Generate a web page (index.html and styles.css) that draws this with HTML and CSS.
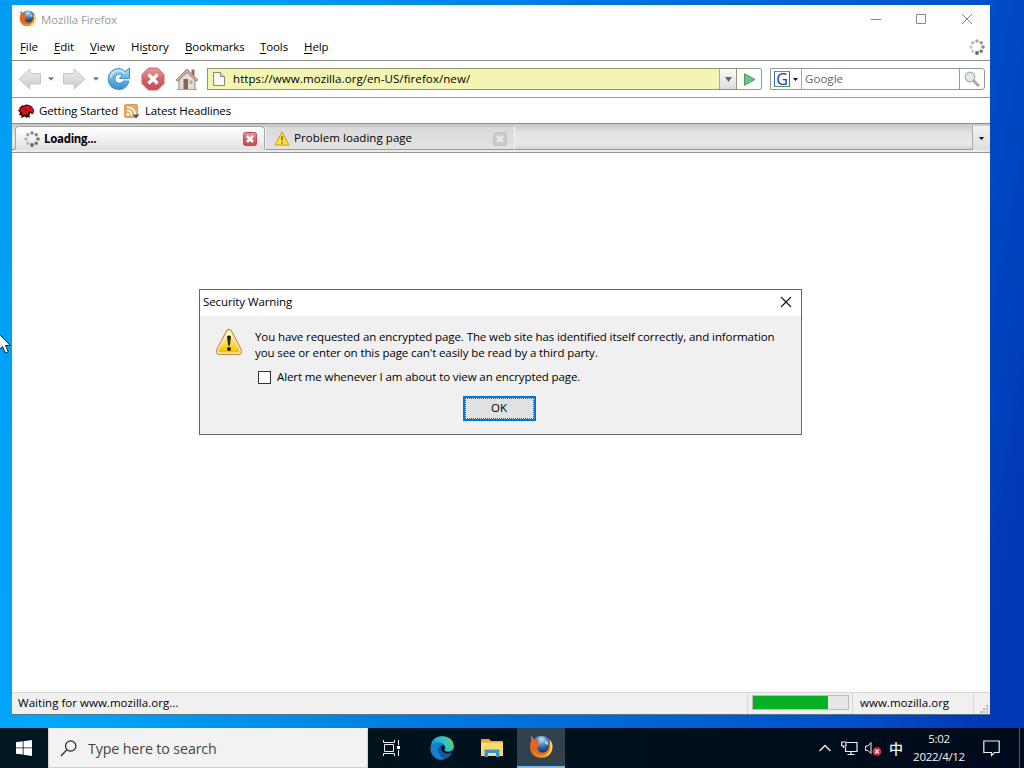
FILE: index.html
```html
<!DOCTYPE html>
<html lang="en">
<head>
    <meta charset="UTF-8"/>
    <title>Mozilla Firefox</title>
    <link rel="stylesheet" href="styles.css">
</head>
<body>
<!-- Shared icons -->
<svg class="defs" width="0" height="0">
    <defs>
        <radialGradient id="globe" cx="50%" cy="20%" r="70%">
            <stop offset="0" stop-color="#b4dcf4"/>
            <stop offset="0.45" stop-color="#3977b8"/>
            <stop offset="1" stop-color="#101f50"/>
        </radialGradient>
        <linearGradient id="fur" x1="0" y1="0" x2="1" y2="1">
            <stop offset="0" stop-color="#e5642c"/>
            <stop offset="0.6" stop-color="#e2661c"/>
            <stop offset="1" stop-color="#f3a530"/>
        </linearGradient>
        <linearGradient id="grey" x1="0" y1="0" x2="0" y2="1">
            <stop offset="0" stop-color="#ececec"/>
            <stop offset="1" stop-color="#cbcbcb"/>
        </linearGradient>
        <linearGradient id="yellow" x1="0" y1="0" x2="0" y2="1">
            <stop offset="0" stop-color="#fffbd0"/>
            <stop offset="0.5" stop-color="#fbe04a"/>
            <stop offset="1" stop-color="#eebc10"/>
        </linearGradient>
        <linearGradient id="blue" x1="0" y1="0" x2="0" y2="1">
            <stop offset="0" stop-color="#a5d8f3"/>
            <stop offset="1" stop-color="#2f8fce"/>
        </linearGradient>
        <linearGradient id="red" x1="0" y1="0" x2="0" y2="1">
            <stop offset="0" stop-color="#e89c9c"/>
            <stop offset="0.5" stop-color="#d4636a"/>
            <stop offset="1" stop-color="#c84a50"/>
        </linearGradient>
        <linearGradient id="edge" x1="0" y1="0.6" x2="1" y2="0.2">
            <stop offset="0" stop-color="#1588d8"/>
            <stop offset="0.5" stop-color="#2bbcd5"/>
            <stop offset="1" stop-color="#62d760"/>
        </linearGradient>
        <symbol id="firefox" viewBox="0 0 24 24">
            <circle cx="12.5" cy="11" r="10.3" fill="url(#globe)"/>
            <path d="M9 4l4-2 3 2-2 2-3 0-1 2zM16 5l3 2 0 3-3-1z" fill="#a5d0ec"/>
            <path d="M2.500 .8Q4 2 5 4.800Q8 4 10.500 5.500Q8.500 6.500 8.500 8.500Q10.500 8.500 11.500 10Q10.500 11.500 8.500 11.800Q8 15.500 11.500 17.300Q16.500 18.500 19 14.500Q20.500 11 19.500 7Q20.500 7.500 21 8.500Q21 5.500 19.500 3.500Q24 7 23.500 13Q22.200 22.500 12.300 23Q2 22.500 1 13Q.8 8.500 2.200 6Q1.600 3 2.500 .8z" fill="url(#fur)"/>
            <path d="M20.500 4.500Q24 8.500 23.300 13.500Q21.800 21.500 13 22.600Q18.500 20.500 20.500 16Q22 12 20.500 4.500z" fill="#fddb52"/>
            <path d="M3 14.500Q6 20.500 12.500 20.800Q17 20.500 19.500 17Q17.500 22 12 22Q5.500 21.500 3 14.500z" fill="#f4a52e"/>
        </symbol>
        <symbol id="spinner" viewBox="0 0 16 16">
            <circle cx="8" cy="2" r="1.800" fill="#a5a5a5"/>
            <circle cx="12.200" cy="3.800" r="1.800" fill="#989898"/>
            <circle cx="14" cy="8" r="1.800" fill="#888"/>
            <circle cx="12.200" cy="12.200" r="1.800" fill="#777"/>
            <circle cx="8" cy="14" r="1.900" fill="#666"/>
            <circle cx="3.800" cy="12.200" r="1.700" fill="#d0d0d0"/>
            <circle cx="2" cy="8" r="1.700" fill="#c6c6c6"/>
            <circle cx="3.800" cy="3.800" r="1.700" fill="#b8b8b8"/>
        </symbol>
        <symbol id="spinner-late" viewBox="0 0 16 16">
            <circle cx="8" cy="2" r="1.700" fill="#888"/>
            <circle cx="12.200" cy="3.800" r="1.700" fill="#858585"/>
            <circle cx="14" cy="8" r="1.800" fill="#777"/>
            <circle cx="12.200" cy="12.200" r="1.800" fill="#707070"/>
            <circle cx="8" cy="14" r="1.900" fill="#666"/>
            <circle cx="3.800" cy="12.200" r="1.700" fill="#bbb"/>
            <circle cx="2" cy="8" r="1.700" fill="#b5b5b5"/>
            <circle cx="3.800" cy="3.800" r="1.700" fill="#a5a5a5"/>
        </symbol>
        <symbol id="arrow" viewBox="0 0 24 22">
            <path d="M1 11L12 .8V5.500H22.500V16H12V21.200z" fill="url(#grey)" stroke="#c8c8c8"/>
        </symbol>
        <symbol id="drop" viewBox="0 0 7 4">
            <path d="M0 0H7L3.500 4z" fill="currentColor"/>
        </symbol>
    </defs>
</svg>

<main class="desktop">
    <section class="window">
        <header class="titlebar">
            <svg class="app-icon" width="17" height="17"><use href="#firefox"/></svg>
            <span class="title">Mozilla Firefox</span>
            <svg class="caption" width="110" height="13" viewBox="0 0 110 13" fill="none" stroke="#888">
                <path d="M4 7.500H14M49.500 2.500h9v9h-9zM95 2l10 10M105 2L95 12"/>
            </svg>
        </header>

        <nav class="menubar">
            <span class="m-file"><u>F</u>ile</span>
            <span class="m-edit"><u>E</u>dit</span>
            <span class="m-view"><u>V</u>iew</span>
            <span class="m-history">Hi<u>s</u>tory</span>
            <span class="m-bookmarks"><u>B</u>ookmarks</span>
            <span class="m-tools"><u>T</u>ools</span>
            <span class="m-help"><u>H</u>elp</span>
            <svg class="throbber" width="16" height="16"><use href="#spinner"/></svg>
        </nav>

        <div class="toolbar">
            <svg class="back" width="24" height="22"><use href="#arrow"/></svg>
            <svg class="small-drop" width="6" height="4"><use href="#drop"/></svg>
            <svg class="forward" width="24" height="22"><use href="#arrow"/></svg>
            <svg class="small-drop" width="6" height="4"><use href="#drop"/></svg>
            <svg class="reload" width="24" height="24" viewBox="0 0 24 24">
                <path d="M18 4.500L22.500 1V11.500H12.500L15.200 8Q11 5.500 8.500 9Q6.500 13.500 10.500 16Q14.500 17 16.500 14H22Q20 22.500 12 22.500Q1.500 22 1.200 12Q2 2 12 1.500Q15.500 1.500 18 4.500z" fill="url(#blue)" stroke="#3f93c5"/>
                <path d="M3.500 11Q4.500 4 12 3.500Q15.500 3.700 18 6.500" fill="none" stroke="#cceaf8" stroke-width="1.500"/>
            </svg>
            <svg class="stop" width="24" height="24" viewBox="0 0 24 24">
                <path d="M7.500 1H16.500L23 7.500V16.500L16.500 23H7.500L1 16.500V7.500z" fill="url(#red)" stroke="#c0686c"/>
                <path d="M7.500 7.500l9 9M16.500 7.500l-9 9" stroke="#fff" stroke-width="3.200"/>
            </svg>
            <svg class="home" width="24" height="24" viewBox="0 0 24 24">
                <path d="M16.500 2.500H19.500V9H16.500z" fill="#a56555"/>
                <path d="M4 11.500L12 4l8 7.500V22.500H4z" fill="#e6ded5" stroke="#92857b"/>
                <path d="M1 13L12 2l11 11-1.800 1.200L12 5.500 2.800 14.200z" fill="#c8aaa0" stroke="#94746a" stroke-width=".8"/>
                <path d="M8.500 12H13V23H8.500z" fill="#8c6357"/>
                <path d="M14.500 13.500H17.500V17H14.500z" fill="#a1afb9"/>
                <path d="M2 22.500H22" stroke="#9aa98c"/>
            </svg>
            <div class="urlbar">
                <svg class="page-icon" width="12" height="14" viewBox="0 0 12 14">
                    <path d="M.5 .5H7.500L11.500 4.500V13.500H.5z" fill="#f8f9f7" stroke="#8a8a85"/>
                    <path d="M7.500 .5V4.500H11.500" fill="#ddd" stroke="#8a8a85"/>
                </svg>
                <span class="url">https://www.mozilla.org/en-US/firefox/new/</span>
                <span class="url-drop"><svg width="7" height="5" viewBox="0 0 7 5"><path d="M0 0H7L3.500 5z" fill="#666"/></svg></span>
            </div>
            <div class="go">
                <svg width="13" height="13" viewBox="0 0 13 13"><path d="M1.500 .8L12 6.500 1.500 12.200z" fill="#72c484" stroke="#4b9a5b"/></svg>
            </div>
            <div class="search">
                <span class="engine">
                    <span class="g-logo">G</span>
                    <svg width="5" height="3"><use href="#drop"/></svg>
                </span>
                <span class="placeholder">Google</span>
                <span class="magnifier">
                    <svg width="17" height="17" viewBox="0 0 17 17">
                        <path d="M9.500 9.500L15 15" stroke="#909090" stroke-width="2.600"/>
                        <path d="M10 9.500L15 14.500" stroke="#ddd"/>
                        <circle cx="6" cy="6" r="4.800" fill="#dfeaee" stroke="#aaa" stroke-width="1.200"/>
                    </svg>
                </span>
            </div>
        </div>

        <div class="bookmarks">
            <svg class="dino" width="16" height="15" viewBox="0 0 16 15">
                <path d="M0 6L2 5 1 3.500 3 3 3.500 1.500 6 1.500 8 .5 11 1 14 2.500 16 6 15.500 9.500 14 10 12.500 9 11.500 11 12 13.500 9.500 13 9 14 6.500 12.500 3 14 3.500 11.500 1 11 2 9z" fill="#2b0505"/>
                <path d="M1.500 7Q3 3 8 1.700Q14 1.500 15.200 6L14.800 9 13.500 8.500 11.500 6.800 10 9 10.800 12 8.500 9.500 7 12 6 10 4 12 4.500 9z" fill="#d61218"/>
                <path d="M7 5.500H9V6.500H7z" fill="#300"/>
            </svg>
            <span class="b-start">Getting Started</span>
            <svg class="rss" width="16" height="16" viewBox="0 0 16 16">
                <rect x=".5" y="1.500" width="13" height="13" rx="1.500" fill="#e9ab62" stroke="#d89a5c"/>
                <circle cx="4" cy="11.500" r="1.400" fill="#fff"/>
                <path d="M3 7.500Q7.500 7.500 7.800 12.500M3 4Q11 4.500 11.300 12.500" fill="none" stroke="#fff" stroke-width="1.600"/>
                <path d="M8.500 11.500H15.500L12 15.500z" fill="#555"/>
            </svg>
            <span>Latest Headlines</span>
        </div>

        <div class="tabs">
            <div class="tab active">
                <svg class="tab-icon" width="16" height="16"><use href="#spinner-late"/></svg>
                <b class="tab-label">Loading...</b>
                <svg class="close" width="14" height="14" viewBox="0 0 14 14">
                    <rect x=".5" y=".5" width="13" height="13" rx="2" fill="url(#red)" stroke="#bd4a55"/>
                    <path d="M4 4l6 6M10 4l-6 6" stroke="#fff" stroke-width="2.500"/>
                </svg>
            </div>
            <div class="tab inactive">
                <svg class="tab-icon" width="16" height="15" viewBox="0 0 16 15">
                    <path d="M8 1L15 14H1z" fill="#fbe338" stroke="#c49a1c" stroke-linejoin="round"/>
                    <path d="M8 5V9.500M8 11V12.500" stroke="#69510a" stroke-width="1.300"/>
                </svg>
                <span class="tab-label">Problem loading page</span>
                <svg class="close" width="14" height="14" viewBox="0 0 14 14">
                    <rect x=".5" y=".5" width="13" height="13" rx="2" fill="#c9c9cb" stroke="#c3c3c6"/>
                    <path d="M4 4l6 6M10 4l-6 6" stroke="#e9e9e9" stroke-width="2.500"/>
                </svg>
            </div>
            <div class="all-tabs"><svg width="5" height="3"><use href="#drop"/></svg></div>
        </div>

        <div class="page"></div>

        <footer class="statusbar">
            <span class="status">Waiting for www.mozilla.org...</span>
            <span class="progress-panel"><span class="progress"><span class="bar"></span></span></span>
            <span class="host">www.mozilla.org</span>
            <span class="grip">
                <svg width="9" height="9" viewBox="0 0 9 9" fill="#b8b8b8"><path d="M6 0h2v2h-2zM3 3h2v2h-2zM6 3h2v2h-2zM0 6h2v2h-2zM3 6h2v2h-2zM6 6h2v2h-2z"/></svg>
            </span>
        </footer>
    </section>

    <section class="dialog">
        <header class="dialog-title">
            <span>Security Warning</span>
            <svg width="12" height="12" viewBox="0 0 12 12"><path d="M1 1l10 10M11 1L1 11" stroke="#111" stroke-width="1.100"/></svg>
        </header>
        <div class="dialog-body">
            <svg class="warning" width="28" height="28" viewBox="0 0 28 28">
                <path d="M11.200 3.500Q14 -.8 16.800 3.500L26.300 22Q27.200 26 23.500 26.300H4.500Q.8 26 1.700 22z" fill="#fff4cf" stroke="#c59048" stroke-width="1.200"/>
                <path d="M12.500 5Q14 2.500 15.500 5L24.600 22.500Q24.800 24.500 23 24.600H5Q3.200 24.500 3.400 22.500z" fill="url(#yellow)"/>
                <path d="M12 8.500Q14 6.500 16 8.500L14.900 17.500H13.100z" fill="#27200c"/>
                <circle cx="14" cy="21" r="2" fill="#27200c"/>
            </svg>
            <div class="message">
                <p>You have requested an encrypted page. The web site has identified itself correctly, and information</p>
                <p>you see or enter on this page can't easily be read by a third party.</p>
                <label class="alert"><span class="checkbox"></span><span>Alert me whenever I am about to view an encrypted page.</span></label>
            </div>
        </div>
        <button class="ok"><span>OK</span></button>
    </section>

    <svg class="cursor" width="12" height="20" viewBox="0 0 12 20">
        <path d="M-1 -1L-1 14.500 2.500 11.500 5.500 18 8.300 16.800 5.500 10.500H10.300z" transform="translate(0 1)" fill="#fff" stroke="#111" stroke-width=".9"/>
    </svg>
</main>

<footer class="taskbar">
    <div class="start">
        <svg width="16" height="16" viewBox="0 0 16 16" fill="#fff"><path d="M0 2.300L6.700 1.300V7.500H0zM7.500 1.200L16 0V7.500H7.500zM0 8.300H6.700V14.600L0 13.700zM7.500 8.300H16V16L7.500 14.800z"/></svg>
    </div>
    <div class="task-search">
        <svg width="17" height="17" viewBox="0 0 17 17" fill="none" stroke="#222" stroke-width="1.200"><circle cx="10.700" cy="6" r="5.200"/><path d="M7 9.700L1 16"/></svg>
        <span>Type here to search</span>
    </div>
    <div class="task task-view">
        <svg width="17" height="16" viewBox="0 0 17 16" fill="none" stroke="#eee"><path d="M.5 0V2.500H11.500V0M.5 16V13.500H11.500V16M1.500 4.500H10.500V11.500H1.500zM15.500 0V5M15.500 10V16"/><path d="M14 6h3v3h-3z" fill="#fff" stroke="none"/></svg>
    </div>
    <div class="task">
        <svg width="24" height="24" viewBox="0 0 24 24">
            <path d="M.3 11Q1.500 .5 12 0Q23.500 .8 24 10.500Q23.500 15.500 18 15.700Q13.800 15.500 14.700 13.200Q16 10.500 13.500 8.500Q7 4.500 .3 11z" fill="url(#edge)"/>
            <path d="M.2 12Q2.500 6.200 8.500 6.300Q12.800 6.500 14.500 9.300Q9.500 8.500 8.500 13Q8.500 20.500 15.500 22.500Q12.500 24.500 8.500 23.400Q.5 20.500 .2 12z" fill="#1680d0"/>
            <path d="M8.500 13Q9 9.500 12 9Q10.200 12 12.500 15.500Q16.500 19 22.300 16.500Q20 21.500 15.500 22.600Q8.500 20.500 8.500 13z" fill="#1458a5"/>
        </svg>
    </div>
    <div class="task">
        <svg width="22" height="18" viewBox="0 0 22 18">
            <path d="M0 1Q0 0 1 0H8L10 2H21Q22 2 22 3V17H0z" fill="#e9a93b"/>
            <path d="M0 3.500H22V17H0z" fill="#fcdc70"/>
            <path d="M3.500 18V10.500H18.500V18H15V14H7V18z" fill="#3e92cf"/>
        </svg>
    </div>
    <div class="task running">
        <svg width="24" height="24"><use href="#firefox"/></svg>
    </div>
    <div class="tray">
        <svg class="tray-up" width="14" height="8" viewBox="0 0 14 8" fill="none" stroke="#eee" stroke-width="1.300"><path d="M1.500 7L7 1.500 12.500 7"/></svg>
        <svg class="network" width="17" height="15" viewBox="0 0 17 15" fill="none" stroke="#eee" stroke-width="1.200"><path d="M6 1.500H16V10.500H4.500V6M.7 1H5V5H.7zM2.500 5V7M10 10.500V13.500M6.500 13.500H13.500"/></svg>
        <svg class="volume" width="17" height="15" viewBox="0 0 17 15" fill="none">
            <path d="M.6 5H3L6 1.500V12.500L3 9.500H.6z" stroke="#eee"/>
            <circle cx="12" cy="10.500" r="4.300" fill="#dc2f3e"/>
            <path d="M10.200 8.700l3.600 3.600M13.800 8.700l-3.600 3.600" stroke="#fff" stroke-width="1.100"/>
        </svg>
        <span class="ime">中</span>
        <span class="clock"><span>5:02</span><span>2022/4/12</span></span>
        <svg class="notify" width="17" height="17" viewBox="0 0 17 17" fill="none" stroke="#eee" stroke-width="1.200"><path d="M.8 1H16.200V12.500H11.500L8.500 15.500V12.500H.8z"/></svg>
        <span class="show-desktop"></span>
    </div>
</footer>
</body>
</html>
```
FILE: styles.css
```css
* {
    margin: 0;
    padding: 0;
    box-sizing: border-box;
}
body {
    width: 1024px;
    height: 768px;
    overflow: hidden;
    display: flex;
    flex-direction: column;
    font-family: "Open Sans", "Noto Sans", sans-serif;
    font-size: 11.5px;
    letter-spacing: -0.1px;
    line-height: 16px;
    color: #000;
    white-space: nowrap;
}
svg {
    display: block;
    flex: none;
}
.defs {
    position: absolute;
}
.desktop {
    position: relative;
    height: 728px;
    background: linear-gradient(100deg, #009cf2 0%, #00a8fb 15%, #0078df 50%, #0050cc 85%, #0039b5 96%);
}

/* Browser window */
.window {
    position: absolute;
    left: 12px;
    top: 5px;
    width: 978px;
    height: 710px;
    display: flex;
    flex-direction: column;
    background: #fff;
    border-bottom: 1px solid #58747f;
}
.titlebar {
    height: 28px;
    display: flex;
    align-items: center;
    padding: 0 13px 1px 8px;
    color: #999;
}
.app-icon {
    margin-left: -1px;
}
.title {
    margin-left: 5px;
    flex: 1;
    padding-top: 2px;
}
.menubar {
    height: 28px;
    display: flex;
    align-items: center;
    padding: 0 5px 0 8px;
    border-bottom: 1px solid #8b8b8b;
}
.menubar u {
    text-underline-offset: 2px;
}
.m-file { width: 34px; }
.m-edit { width: 36px; }
.m-view { width: 41px; }
.m-history { width: 54px; }
.m-bookmarks { width: 75px; }
.m-tools { width: 44px; }
.throbber {
    margin-left: auto;
}
.toolbar {
    height: 37px;
    display: flex;
    align-items: center;
    padding: 0 5px 0 6px;
    border-bottom: 1px solid #999;
}
.small-drop {
    color: #777;
    margin: 0 8px 0 6px;
}
.forward {
    transform: scaleX(-1);
}
.forward + .small-drop {
    margin: 0 7px;
}
.reload {
    margin-left: 1px;
}
.stop {
    margin-left: 10px;
}
.home {
    margin-left: 10px;
}
.urlbar {
    height: 22px;
    width: 530px;
    margin-left: 8px;
    display: flex;
    align-items: center;
    background: #f3f6b3;
    border: 1px solid #949474;
}
.page-icon {
    margin-left: 5px;
}
.url {
    margin-left: 8px;
    flex: 1;
    letter-spacing: 0.08px;
}
.url-drop {
    width: 17px;
    height: 20px;
    display: flex;
    align-items: center;
    justify-content: center;
    background: linear-gradient(#fafafa, #ddd);
    border-left: 1px solid #aaa;
}
.go {
    width: 25px;
    height: 22px;
    display: flex;
    align-items: center;
    justify-content: center;
    padding-left: 1px;
    border: 1px solid #999;
    border-left: none;
    border-radius: 0 3px 3px 0;
}
.search {
    width: 215px;
    height: 22px;
    margin-left: 8px;
    display: flex;
    border: 1px solid #999;
    border-radius: 0 3px 3px 0;
}
.engine {
    width: 31px;
    display: flex;
    align-items: center;
    padding-left: 3px;
    gap: 3px;
    border-right: 1px solid #aaa;
}
.g-logo {
    width: 16px;
    height: 16px;
    border: 1px solid;
    border-color: #4d96c4 #c63a3a #4f9d59 #3b6fb5;
    font: 16px/14px "Open Sans", sans-serif;
    letter-spacing: 0;
    text-align: center;
    color: #16389c;
}
.placeholder {
    flex: 1;
    padding-left: 3px;
    line-height: 20px;
    letter-spacing: 0.05px;
    color: #666;
}
.magnifier {
    width: 25px;
    display: flex;
    align-items: center;
    justify-content: center;
    border-left: 1px solid #999;
}
.bookmarks {
    height: 25px;
    display: flex;
    align-items: center;
    padding: 1px 0 0 6px;
}
.b-start {
    width: 85px;
    margin-left: 5px;
    letter-spacing: -0.15px;
}
.rss {
    margin-right: 5px;
}
.rss + span {
    letter-spacing: -0.17px;
}
.tabs {
    height: 30px;
    display: flex;
    align-items: flex-start;
    padding: 2px 0 0 3px;
    background: linear-gradient(#c8c8c8, #e4e4e4 9px, #e9e9e9 20px, #d4d4d4 25px, #999 25px, #999 26px, #ececec 26px);
    border-top: 1px solid #8b8b8b;
    border-bottom: 1px solid #929292;
}
.tab {
    width: 250px;
    height: 24px;
    display: flex;
    align-items: center;
    padding: 0 7px 0 8px;
    background: linear-gradient(#dadada, #e3e3e3);
    border: 1px solid #c4c4c4;
}
.inactive {
    border-left-color: #f5f5f5;
    border-right-color: #f5f5f5;
    border-bottom-color: #999;
}
.active {
    background: linear-gradient(#fff, #f5f5f5 40%, #e2e2e2);
    border-color: #a5a5a5;
    border-bottom-color: #e2e2e2;
    border-radius: 4px 4px 0 0;
}
.active .tab-label,
.active .tab-icon,
.tab .close {
    margin-top: 1px;
}
.active .tab-label {
    letter-spacing: -0.3px;
}
.tab-label {
    margin-left: 4px;
    flex: 1;
    letter-spacing: 0.05px;
}
.all-tabs {
    width: 18px;
    height: 24px;
    margin-left: auto;
    display: flex;
    align-items: center;
    justify-content: center;
    border-left: 1px solid #aaa;
    background: linear-gradient(#f2f2f2, #ddd);
}
.page {
    flex: 1;
}
.statusbar {
    height: 22px;
    display: flex;
    align-items: flex-start;
    background: #f0f0f0;
    border-top: 1px solid #d6d6d6;
}
.status {
    flex: 1;
    padding-left: 6px;
    line-height: 19px;
    letter-spacing: 0.03px;
}
.progress-panel {
    width: 105px;
    height: 21px;
    padding: 2px 4px;
    border-left: 1px solid #d8d8d8;
}
.progress {
    width: 97px;
    height: 15px;
    display: block;
    background: #e6e6e6;
    border: 1px solid #bcbcbc;
}
.bar {
    width: 75px;
    height: 13px;
    display: block;
    background: #06b025;
}
.host {
    width: 121px;
    height: 21px;
    padding-left: 7px;
    line-height: 19px;
    letter-spacing: 0.03px;
    border-left: 1px solid #d8d8d8;
}
.grip {
    width: 17px;
    height: 21px;
    padding: 12px 0 0 6px;
    border-left: 1px solid #d8d8d8;
}

/* Security dialog */
.dialog {
    position: absolute;
    left: 199px;
    top: 289px;
    width: 603px;
    height: 146px;
    background: #f0f0f0;
    border: 1px solid #666;
}
.dialog-title {
    height: 26px;
    display: flex;
    align-items: center;
    justify-content: space-between;
    padding: 0 9px 2px 3px;
    background: #fff;
}
.dialog-body {
    display: flex;
    padding: 12px 0 0 15px;
}
.message {
    margin: 1px 0 0 12px;
}
.alert {
    display: flex;
    align-items: center;
    margin-top: 8px;
    padding-left: 3px;
}
.checkbox {
    width: 13px;
    height: 13px;
    margin-right: 6px;
    background: #fff;
    border: 1px solid #333;
}
.ok {
    display: block;
    width: 73px;
    height: 25px;
    margin: 11px auto 0 263px;
    padding: 0 1px 2px 0;
    font: inherit;
    letter-spacing: inherit;
    color: #000;
    background: #e1e1e1;
    border: 2px solid #0078d7;
    outline: 1px dotted #0078d7;
    outline-offset: -3px;
}
.cursor {
    position: absolute;
    left: 0;
    top: 334px;
}

/* Taskbar */
.taskbar {
    height: 40px;
    display: flex;
    background: linear-gradient(90deg, #001820, #00101c 60%, #000a1c);
    color: #f4f4f4;
}
.start {
    width: 48px;
    display: flex;
    align-items: center;
    justify-content: center;
}
.task-search {
    width: 320px;
    display: flex;
    align-items: center;
    padding: 1px 0 0 11px;
    gap: 11px;
    background: #f2f2f2;
    border: 1px solid #d0d0d0;
    border-top-color: #e8f4f8;
    font-size: 14.2px;
    color: #444;
}
.task {
    width: 48px;
    margin-right: 2px;
    display: flex;
    align-items: center;
    justify-content: center;
}
.task-view {
    width: 47px;
}
.task-view + .task {
    margin-left: 1px;
}
.running {
    margin-left: -1px;
    background: #31414d;
    border-bottom: 2px solid #76b9ed;
}
.tray {
    margin-left: auto;
    display: flex;
    align-items: center;
}
.tray-up {
    margin-right: 1px;
}
.network {
    margin-left: 8px;
}
.volume {
    margin-left: 7px;
}
.ime {
    margin-left: 7px;
    font: 500 14px/20px "Noto Sans CJK SC", sans-serif;
}
.clock {
    width: 58px;
    margin-left: 7px;
    display: flex;
    flex-direction: column;
    align-items: center;
    line-height: 18px;
    letter-spacing: -0.3px;
}
.notify {
    margin-left: 15px;
}
.show-desktop {
    width: 5px;
    height: 40px;
    margin-left: 19px;
    border-left: 1px solid #4a5a66;
}
```
